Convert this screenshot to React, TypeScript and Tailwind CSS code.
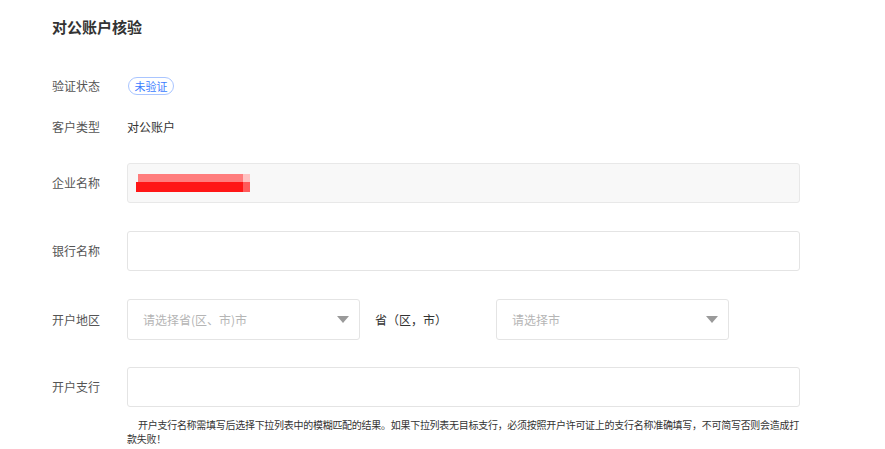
import React from "react";

const font = { fontFamily: '"Noto Sans CJK SC", "Noto Sans", sans-serif' };

const Label = ({ children }: { children: React.ReactNode }) => (
  <div className="w-[75px] shrink-0 text-[12px] text-[#555]">{children}</div>
);

const Caret = () => (
  <svg width="12" height="7" viewBox="0 0 12 7" className="shrink-0">
    <path d="M0 0 H12 L6 7 Z" fill="#9a9a9a" />
  </svg>
);

const SelectBox = ({ placeholder }: { placeholder: string }) => (
  <div className="flex h-full w-[233px] items-center justify-between rounded-[3px] border border-[#e4e4e4] bg-white pl-[15px] pr-[10px]">
    <span className="text-[12px] text-[#b5b5b5]">{placeholder}</span>
    <Caret />
  </div>
);

export default function App() {
  return (
    <div className="min-h-[449px] w-[885px] bg-white pl-[52px]" style={font}>
      {/* title */}
      <div className="flex h-[54px] items-center text-[15px] font-bold text-[#333]">
        对公账户核验
      </div>

      <div className="mt-[12px] flex h-[40px] items-center">
        <Label>验证状态</Label>
        <span className="ml-px flex h-[18px] w-[46px] items-center justify-center rounded-full border border-[#a9c5ff] text-[11px] text-[#3b7cff]">
          未验证
        </span>
      </div>

      <div className="mt-px flex h-[40px] items-center">
        <Label>客户类型</Label>
        <span className="text-[12px] text-[#333]">对公账户</span>
      </div>

      <div className="mt-[16px] flex h-[40px] items-center">
        <Label>企业名称</Label>
        <div className="flex h-full w-[673px] items-center rounded-[3px] border border-[#e8e8e8] bg-[#f8f8f8] pl-[8px]">
          {/* redacted value */}
          <div className="flex flex-col">
            <div className="flex h-[8px] pl-[2px]">
              <div className="w-[105px] bg-[#ff7d7d]" />
              <div className="w-[7px] bg-[#ffc2c2]" />
            </div>
            <div className="flex h-[10px]">
              <div className="w-[107px] bg-[#ff1616]" />
              <div className="w-[7px] bg-[#ff5a5a]" />
            </div>
          </div>
        </div>
      </div>

      <div className="mt-[28px] flex h-[40px] items-center">
        <Label>银行名称</Label>
        <div className="h-full w-[673px] rounded-[3px] border border-[#e4e4e4] bg-white" />
      </div>

      <div className="mt-[28px] flex h-[41px] items-center">
        <Label>开户地区</Label>
        <SelectBox placeholder="请选择省(区、市)市" />
        <span className="w-[136px] pl-[15px] text-[12px] text-[#333]">省（区，市）</span>
        <SelectBox placeholder="请选择市" />
      </div>

      <div className="mt-[27px] flex h-[40px] items-center">
        <Label>开户支行</Label>
        <div className="h-full w-[673px] rounded-[3px] border border-[#e4e4e4] bg-white" />
      </div>

      <p className="ml-[75px] mt-[11px] whitespace-nowrap text-[10px] leading-[14px] tracking-[-0.28px] text-[#333]">
        <span className="pl-[11px]">
          开户支行名称需填写后选择下拉列表中的模糊匹配的结果。如果下拉列表无目标支行，必须按照开户许可证上的支行名称准确填写，不可简写否则会造成打
        </span>
        <br />
        款失败！
      </p>
    </div>
  );
}
